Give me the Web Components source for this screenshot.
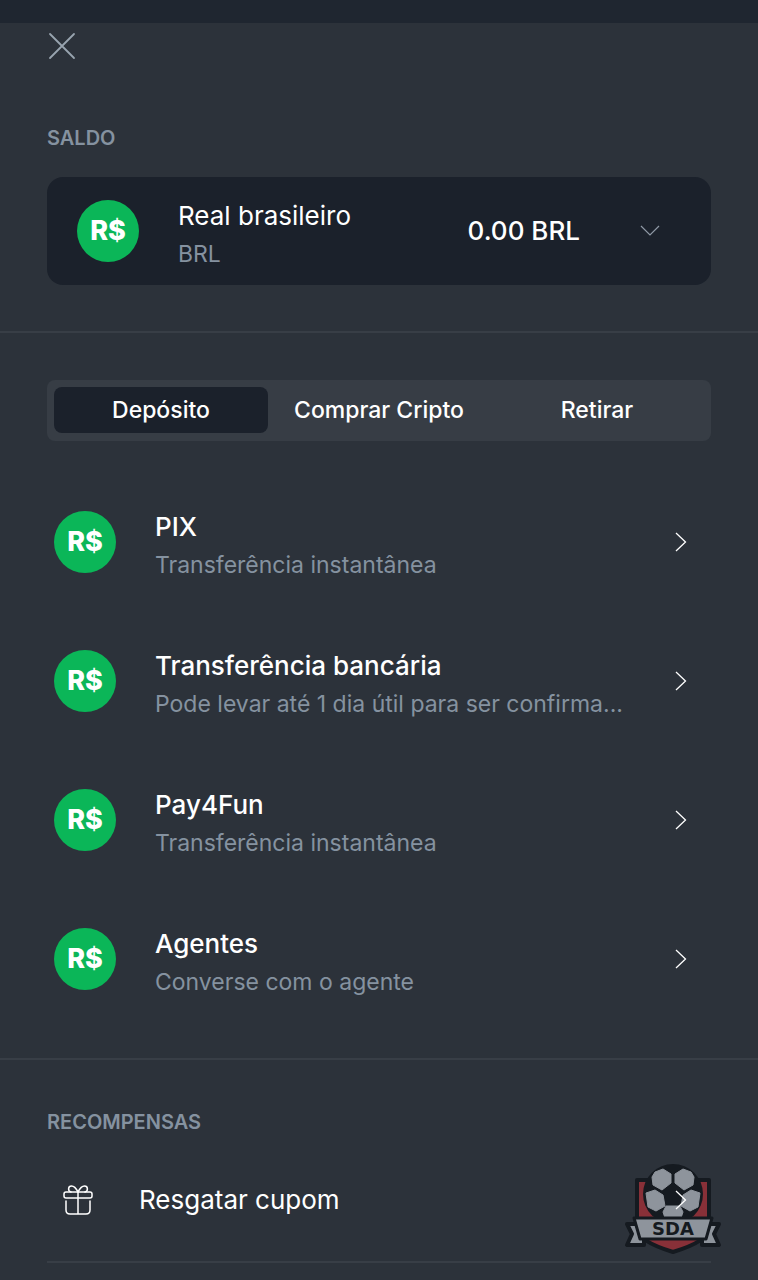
<!DOCTYPE html>
<html lang="pt-BR">
<head>
<meta charset="UTF-8">
<meta name="viewport" content="width=device-width, initial-scale=1">
<title>Carteira</title>
<style>
    :root {
        --fundo: #2c323a;
        --escuro: #1b212b;
        --painel: #373d45;
        --linha: #383e46;
        --texto: #ffffff;
        --suave: #8592a0;
    }

    body {
        margin: 0;
        min-height: 100vh;
        background: var(--fundo);
        color: var(--texto);
        font-family: Inter, "Liberation Sans", sans-serif;
    }
</style>
</head>
<body>
<carteira-app>
    <secao-carteira titulo="Saldo">
        <saldo-card nome="Real brasileiro" moeda="BRL" valor="0.00"></saldo-card>
    </secao-carteira>
    <secao-carteira>
        <abas-carteira opcoes="Depósito,Comprar Cripto,Retirar"></abas-carteira>
        <metodo-item titulo="PIX" detalhe="Transferência instantânea"></metodo-item>
        <metodo-item titulo="Transferência bancária" detalhe="Pode levar até 1 dia útil para ser confirma..."></metodo-item>
        <metodo-item titulo="Pay4Fun" detalhe="Transferência instantânea"></metodo-item>
        <metodo-item titulo="Agentes" detalhe="Converse com o agente"></metodo-item>
    </secao-carteira>
    <secao-carteira titulo="Recompensas">
        <recompensa-item>Resgatar cupom</recompensa-item>
    </secao-carteira>
</carteira-app>

<script>
const SETA = `
    <svg class="seta" width="12" height="20" viewBox="0 0 12 20" fill="none" stroke="currentColor" stroke-width="1.3" aria-hidden="true">
        <path d="M1 1l9.500 9L1 19"/>
    </svg>`;

// Moeda verde com o símbolo do real
class MoedaIcone extends HTMLElement {
    connectedCallback() {
        this.attachShadow({ mode: 'open' });
        this.shadowRoot.innerHTML = `
            <style>
                :host {
                    display: flex;
                    align-items: center;
                    justify-content: center;
                    flex: none;
                    width: 62px;
                    height: 62px;
                    border-radius: 50%;
                    background: #0bb658;
                    color: white;
                    font: 800 27px/32px Inter, sans-serif;
                }
            </style>
            <span>R$</span>
        `;
    }
}
customElements.define('moeda-icone', MoedaIcone);

// Estrutura geral: faixa do topo, botão de fechar e seções
class CarteiraApp extends HTMLElement {
    connectedCallback() {
        this.attachShadow({ mode: 'open' });
        this.shadowRoot.innerHTML = `
            <style>
                :host { display: block; }
                .topo {
                    height: 23px;
                    background: #1f2630;
                }
                .fechar {
                    display: block;
                    margin: 8px 0 20px 47px;
                    padding: 0;
                    border: 0;
                    background: none;
                    color: #98a4af;
                    cursor: pointer;
                }
                .fechar svg { display: block; }
            </style>
            <div class="topo"></div>
            <button class="fechar" type="button" aria-label="Fechar">
                <svg width="30" height="30" viewBox="0 0 30 30" fill="none" stroke="currentColor" stroke-width="1.8" stroke-linecap="round">
                    <path d="M3 3l24 24M27 3L3 27"/>
                </svg>
            </button>
            <slot></slot>
        `;
    }
}
customElements.define('carteira-app', CarteiraApp);

class SecaoCarteira extends HTMLElement {
    connectedCallback() {
        const titulo = this.getAttribute('titulo');

        this.attachShadow({ mode: 'open' });
        this.shadowRoot.innerHTML = `
            <style>
                :host {
                    display: block;
                    padding: 47px 47px 46px;
                    border-bottom: 2px solid var(--linha);
                }
                :host(:last-child) {
                    padding-bottom: 0;
                    border-bottom: 0;
                }
                :host(:first-child) { padding-top: 42px; }
                :host(:nth-child(2)) { padding-bottom: 30px; }
                h2 {
                    margin: 0 0 24px;
                    color: var(--suave);
                    font-size: 20px;
                    font-weight: 600;
                    line-height: 30px;
                    text-transform: uppercase;
                }
            </style>
            ${titulo ? `<h2>${titulo}</h2>` : ''}
            <slot></slot>
        `;
    }
}
customElements.define('secao-carteira', SecaoCarteira);

class SaldoCard extends HTMLElement {
    connectedCallback() {
        const nome = this.getAttribute('nome');
        const moeda = this.getAttribute('moeda');
        const valor = this.getAttribute('valor');

        this.attachShadow({ mode: 'open' });
        this.shadowRoot.innerHTML = `
            <style>
                :host { display: block; }
                button {
                    display: flex;
                    align-items: center;
                    width: 100%;
                    padding: 12px 51px 12px 30px;
                    border: 0;
                    border-radius: 16px;
                    background: var(--escuro);
                    color: inherit;
                    font: inherit;
                    text-align: left;
                    cursor: pointer;
                }
                .info {
                    display: flex;
                    flex-direction: column;
                    flex: 1;
                    margin-left: 39px;
                    padding-top: 8px;
                    line-height: 38px;
                }
                .nome { font-size: 26px; }
                .moeda {
                    color: var(--suave);
                    font-size: 23px;
                }
                .valor {
                    margin-right: 60px;
                    font-size: 26px;
                    font-weight: 500;
                    line-height: 38px;
                }
                svg { color: #8f99a5; }
            </style>
            <button type="button" aria-haspopup="listbox">
                <moeda-icone></moeda-icone>
                <span class="info">
                    <span class="nome">${nome}</span>
                    <span class="moeda">${moeda}</span>
                </span>
                <span class="valor">${valor} ${moeda}</span>
                <svg width="20" height="12" viewBox="0 0 20 12" fill="none" stroke="currentColor" stroke-width="1.2" aria-hidden="true">
                    <path d="M1 1l9 9 9-9"/>
                </svg>
            </button>
        `;
    }
}
customElements.define('saldo-card', SaldoCard);

class AbasCarteira extends HTMLElement {
    connectedCallback() {
        const opcoes = this.getAttribute('opcoes').split(',');

        this.attachShadow({ mode: 'open' });
        this.shadowRoot.innerHTML = `
            <style>
                :host { display: block; margin-bottom: 31px; }
                .abas {
                    display: grid;
                    grid-template-columns: repeat(3, 1fr);
                    gap: 4px;
                    padding: 7px 7px 8px;
                    border-radius: 8px;
                    background: var(--painel);
                }
                button {
                    padding: 8px 0;
                    border: 0;
                    border-radius: 8px;
                    background: none;
                    color: inherit;
                    font: inherit;
                    font-size: 23px;
                    font-weight: 500;
                    line-height: 30px;
                    white-space: nowrap;
                    cursor: pointer;
                }
                button[aria-selected="true"] { background: var(--escuro); }
            </style>
            <div class="abas" role="tablist">
                ${opcoes.map((opcao, i) => `<button type="button" role="tab" aria-selected="${i === 0}">${opcao}</button>`).join('')}
            </div>
        `;

        const botoes = this.shadowRoot.querySelectorAll('button');
        botoes.forEach(botao => {
            botao.addEventListener('click', () => {
                botoes.forEach(b => b.setAttribute('aria-selected', b === botao));
            });
        });
    }
}
customElements.define('abas-carteira', AbasCarteira);

class MetodoItem extends HTMLElement {
    connectedCallback() {
        const titulo = this.getAttribute('titulo');
        const detalhe = this.getAttribute('detalhe');

        this.attachShadow({ mode: 'open' });
        this.shadowRoot.innerHTML = `
            <style>
                :host { display: block; }
                a {
                    display: flex;
                    align-items: center;
                    padding: 28px 24px 27px 7px;
                    color: inherit;
                    text-decoration: none;
                }
                .info {
                    flex: 1;
                    min-width: 0;
                    margin: 0 40px 0 39px;
                    padding-top: 8px;
                    line-height: 38px;
                }
                .titulo, .detalhe {
                    display: block;
                    overflow: hidden;
                    text-overflow: ellipsis;
                    white-space: nowrap;
                }
                .titulo {
                    font-size: 26px;
                    font-weight: 500;
                }
                .detalhe {
                    color: var(--suave);
                    font-size: 23px;
                }
                .seta { flex: none; }
            </style>
            <a href="#">
                <moeda-icone></moeda-icone>
                <span class="info">
                    <span class="titulo">${titulo}</span>
                    <span class="detalhe">${detalhe}</span>
                </span>
                ${SETA}
            </a>
        `;
    }
}
customElements.define('metodo-item', MetodoItem);

// Escudo com bola e faixa
class EscudoSda extends HTMLElement {
    connectedCallback() {
        this.attachShadow({ mode: 'open' });
        this.shadowRoot.innerHTML = `
            <style>
                :host { display: block; }
                svg { display: block; }
            </style>
            <svg width="98" height="92" viewBox="0 0 98 92" role="img" aria-label="SDA">
                <g stroke="#151a20" stroke-width="4" stroke-linejoin="round">
                    <path fill="#883038" d="M13 17h72v48q0 13-36 24Q13 78 13 65z"/>
                    <path fill="#8e949c" d="M12 61H3l5 10-5 11h17v-8zM86 61h9l-5 10 5 11H78v-8z"/>
                </g>
                <circle cx="49" cy="31" r="30" fill="#151a20"/>
                <g fill="#8e949c" stroke="#8e949c" stroke-width="1" stroke-linejoin="round">
                    <path d="M28 14l3-5 8-3 8 5v9l-9 7-9-5z"/>
                    <path d="M70 14l-3-5-8-3-8 5v9l9 7 9-5z"/>
                    <path d="M22 30l9-3 8 5 2 11-9 5-8-4z"/>
                    <path d="M76 30l-9-3-8 5-2 11 9 5 8-4z"/>
                    <path d="M42 43h14l3 6-2 6H41l-2-6z"/>
                </g>
                <path d="M10 55h78l-6 21H16z" fill="#8e949c" stroke="#151a20" stroke-width="3" stroke-linejoin="round"/>
                <text x="49" y="72" text-anchor="middle" fill="#151a20" font-family="DejaVu Sans, sans-serif" font-size="18" font-weight="700">SDA</text>
            </svg>
        `;
    }
}
customElements.define('escudo-sda', EscudoSda);

class RecompensaItem extends HTMLElement {
    connectedCallback() {
        this.attachShadow({ mode: 'open' });
        this.shadowRoot.innerHTML = `
            <style>
                :host {
                    display: block;
                    position: relative;
                    border-bottom: 2px solid var(--linha);
                }
                a {
                    display: flex;
                    align-items: center;
                    padding: 20px 24px 42px 15px;
                    color: inherit;
                    font-size: 26px;
                    line-height: 38px;
                    text-decoration: none;
                }
                .rotulo { flex: 1; margin-left: 45px; }
                .seta { position: relative; z-index: 1; }
                /* o escudo flutua sobre o fim da linha, atrás da seta */
                escudo-sda {
                    position: absolute;
                    right: -11px;
                    bottom: 6px;
                    pointer-events: none;
                }
            </style>
            <a href="#">
                <svg width="32" height="32" viewBox="0 0 32 32" fill="none" stroke="currentColor" stroke-width="1.5" stroke-linejoin="round" stroke-linecap="round" aria-hidden="true">
                    <rect x="2" y="8" width="28" height="6" rx="2"/>
                    <path d="M4 17v9q0 4 4 4h16q4 0 4-4v-9M16 8v22"/>
                    <path d="M16 8C14 4 12 2 9.500 2 6 2 5.500 7 9 8M16 8c2-4 4-6 6.500-6 3.500 0 4 5 .5 6"/>
                </svg>
                <span class="rotulo"><slot></slot></span>
                ${SETA}
            </a>
            <escudo-sda></escudo-sda>
        `;
    }
}
customElements.define('recompensa-item', RecompensaItem);
</script>
</body>
</html>
